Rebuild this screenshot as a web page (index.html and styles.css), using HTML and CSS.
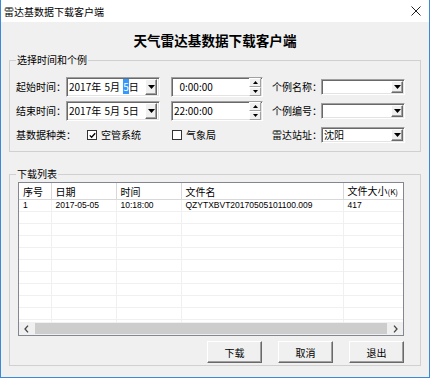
FILE: index.html
```html
<!DOCTYPE html>
<html lang="zh-CN">
<head>
    <meta charset="UTF-8">
    <meta name="viewport" content="width=device-width, initial-scale=1.0">
    <title>雷达基数据下载客户端</title>
    <link rel="stylesheet" href="styles.css">
</head>
<body>
    <div class="window">
        <div class="titlebar">
            <span>雷达基数据下载客户端</span>
            <svg class="close" width="10" height="10" viewBox="0 0 10 10"><path d="M0.5 0.5l9 9M9.5 0.5l-9 9" stroke="#222" stroke-width="1" fill="none"/></svg>
        </div>

        <div class="client">
            <h1>天气雷达基数据下载客户端</h1>

            <fieldset class="group group-query">
                <legend>选择时间和个例</legend>
                <div class="query-grid">
                    <label class="lbl">起始时间：</label>
                    <div class="datebox sunken">
                        <span class="date-text">2017年 5月 <span class="sel">5</span>日</span>
                        <span class="ddbtn"><svg width="7" height="4" viewBox="0 0 7 4"><path d="M0 0h7L3.5 4z"/></svg></span>
                    </div>
                    <div class="timebox sunken">
                        <span><span class="hh">0</span>:00:00</span>
                        <span class="spin">
                            <span class="spinbtn"><svg width="5" height="3" viewBox="0 0 5 3"><path d="M0 3h5L2.5 0z"/></svg></span>
                            <span class="spinbtn"><svg width="5" height="3" viewBox="0 0 5 3"><path d="M0 0h5L2.5 3z"/></svg></span>
                        </span>
                    </div>
                    <label class="lbl">个例名称：</label>
                    <div class="combo sunken">
                        <span></span>
                        <span class="ddbtn"><svg width="7" height="4" viewBox="0 0 7 4"><path d="M0 0h7L3.5 4z"/></svg></span>
                    </div>

                    <label class="lbl">结束时间：</label>
                    <div class="datebox sunken">
                        <span class="date-text">2017年 5月 5日</span>
                        <span class="ddbtn"><svg width="7" height="4" viewBox="0 0 7 4"><path d="M0 0h7L3.5 4z"/></svg></span>
                    </div>
                    <div class="timebox sunken">
                        <span><span class="hh">22</span>:00:00</span>
                        <span class="spin">
                            <span class="spinbtn"><svg width="5" height="3" viewBox="0 0 5 3"><path d="M0 3h5L2.5 0z"/></svg></span>
                            <span class="spinbtn"><svg width="5" height="3" viewBox="0 0 5 3"><path d="M0 0h5L2.5 3z"/></svg></span>
                        </span>
                    </div>
                    <label class="lbl">个例编号：</label>
                    <div class="combo sunken">
                        <span></span>
                        <span class="ddbtn"><svg width="7" height="4" viewBox="0 0 7 4"><path d="M0 0h7L3.5 4z"/></svg></span>
                    </div>

                    <div class="kind">
                        <label class="lbl kind-lbl">基数据种类：</label>
                        <span class="check-item">
                            <span class="check"><svg width="7" height="7" viewBox="0 0 7 7"><path d="M0.8 3.4l1.8 1.9L6.2 1.2" stroke="#000" stroke-width="1.3" fill="none"/></svg></span>
                            空管系统
                        </span>
                        <span class="check-item">
                            <span class="check"></span>
                            气象局
                        </span>
                    </div>
                    <label class="lbl">雷达站址：</label>
                    <div class="combo sunken">
                        <span>沈阳</span>
                        <span class="ddbtn"><svg width="7" height="4" viewBox="0 0 7 4"><path d="M0 0h7L3.5 4z"/></svg></span>
                    </div>
                </div>
            </fieldset>

            <fieldset class="group group-list">
                <legend>下载列表</legend>
                <div class="listview">
                    <div class="list-body">
                        <table class="grid">
                            <colgroup>
                                <col class="c-no">
                                <col class="c-date">
                                <col class="c-time">
                                <col class="c-file">
                                <col class="c-size">
                            </colgroup>
                            <thead>
                                <tr><th>序号</th><th>日期</th><th>时间</th><th>文件名</th><th>文件大小<small>(K)</small></th></tr>
                            </thead>
                            <tbody>
                                <tr><td>1</td><td>2017-05-05</td><td>10:18:00</td><td>QZYTXBVT20170505101100.009</td><td>417</td></tr>
                                <tr><td></td><td></td><td></td><td></td><td></td></tr>
                                <tr><td></td><td></td><td></td><td></td><td></td></tr>
                                <tr><td></td><td></td><td></td><td></td><td></td></tr>
                                <tr><td></td><td></td><td></td><td></td><td></td></tr>
                                <tr><td></td><td></td><td></td><td></td><td></td></tr>
                                <tr><td></td><td></td><td></td><td></td><td></td></tr>
                                <tr><td></td><td></td><td></td><td></td><td></td></tr>
                                <tr><td></td><td></td><td></td><td></td><td></td></tr>
                                <tr><td></td><td></td><td></td><td></td><td></td></tr>
                                <tr><td></td><td></td><td></td><td></td><td></td></tr>
                                <tr><td></td><td></td><td></td><td></td><td></td></tr>
                            </tbody>
                        </table>
                    </div>
                    <div class="hscroll">
                        <span class="arrow"><svg width="5" height="8" viewBox="0 0 5 8"><path d="M4 0.6L1 4l3 3.4" stroke="#444" stroke-width="1.3" fill="none"/></svg></span>
                        <span class="thumb"></span>
                        <span class="arrow"><svg width="5" height="8" viewBox="0 0 5 8"><path d="M1 0.6L4 4 1 7.4" stroke="#444" stroke-width="1.3" fill="none"/></svg></span>
                    </div>
                </div>

                <div class="buttons">
                    <button class="btn">下载</button>
                    <button class="btn">取消</button>
                    <button class="btn">退出</button>
                </div>
            </fieldset>
        </div>
    </div>
</body>
</html>
```

FILE: styles.css
```css
* {
    box-sizing: border-box;
}

body {
    margin: 0;
    font-family: "Noto Sans CJK SC", sans-serif;
    font-size: 10px;
    color: #000;
    background: #fff;
}

.window {
    width: 430px;
    height: 378px;
    border: 1px solid #3b8ad9;
    border-top: 0;
    background: #f0f0f0;
    overflow: hidden;
}

.titlebar {
    height: 22px;
    background: #fff;
    display: flex;
    align-items: center;
    justify-content: space-between;
    padding: 0 8px 0 3px;
}

.client {
    padding: 0 8px;
}

h1 {
    margin: 8px 0 4px;
    font-size: 13.6px;
    line-height: 20px;
    font-weight: bold;
    text-align: center;
}

.group {
    margin: 0;
    min-width: 0;
    border: 1px solid #d0d0d0;
}

.group legend {
    padding: 0 1px;
    line-height: 12px;
    font-size: 10px;
}

.group-query {
    padding: 11px 15px 6px 6px;
}

.group-list {
    margin-top: 16px;
    padding: 2px 16px 2px 8px;
}

.group-list legend {
    margin-left: -2px;
}

/* query form */
.query-grid {
    display: grid;
    grid-template-columns: 50px 105px 101px 49px 84px;
    grid-template-rows: 20px 20px 20px;
    row-gap: 4px;
    align-items: center;
}

.lbl {
    white-space: nowrap;
    line-height: 12px;
}

.sunken {
    background: #fff;
    border: 1px solid;
    border-color: #a0a0a0 #fff #fff #a0a0a0;
    box-shadow: inset 1px 1px #696969, inset -1px -1px #e3e3e3;
    display: flex;
    align-items: center;
    line-height: 12px;
}

.datebox {
    width: 94px;
    height: 20px;
    padding-left: 2px;
}

.date-text {
    white-space: pre;
    word-spacing: 1px;
}

.timebox {
    width: 92px;
    height: 20px;
    padding-left: 2px;
}

.hh {
    display: inline-block;
    width: 11px;
    text-align: right;
}

.sel {
    background: #3399ff;
    color: #fff;
}

.combo {
    width: 84px;
    height: 16px;
    padding-left: 2px;
}

.ddbtn {
    margin-left: auto;
    margin-right: 2px;
    width: 12px;
    height: 16px;
    background: #f0f0f0;
    border: 1px solid;
    border-color: #fff #696969 #696969 #fff;
    box-shadow: inset -1px -1px #a0a0a0;
    display: flex;
    align-items: center;
    justify-content: center;
}

.combo .ddbtn {
    height: 12px;
    margin-right: 1px;
}

.spin {
    margin-left: auto;
    margin-right: 1px;
    display: flex;
    flex-direction: column;
}

.spinbtn {
    width: 12px;
    height: 9px;
    background: #f0f0f0;
    border: 1px solid;
    border-color: #fff #a0a0a0 #a0a0a0 #fff;
    display: flex;
    align-items: center;
    justify-content: center;
}

.kind {
    grid-column: 1 / 4;
    display: flex;
    align-items: center;
}

.kind-lbl {
    width: 71px;
}

.check-item {
    width: 85px;
    display: flex;
    align-items: center;
    gap: 4px;
    line-height: 12px;
}

.check {
    width: 10px;
    height: 10px;
    background: #fff;
    border: 1px solid #333;
    display: flex;
    align-items: center;
    justify-content: center;
}

/* list view */
.listview {
    height: 154px;
    background: #fff;
    border: 1px solid #828790;
    display: flex;
    flex-direction: column;
}

.list-body {
    height: 139px;
    overflow: hidden;
}

.grid {
    width: 384px;
    table-layout: fixed;
    border-collapse: collapse;
}

.c-no { width: 32px; }
.c-date { width: 65px; }
.c-time { width: 65px; }
.c-file { width: 162px; }
.c-size { width: 60px; }

.grid th {
    height: 16px;
    padding: 0 0 0 4px;
    font-weight: normal;
    text-align: left;
    line-height: 15px;
    white-space: nowrap;
    overflow: hidden;
    border-right: 1px solid #d8d8d8;
    border-bottom: 1px solid #d8d8d8;
}

.grid th small {
    font-size: 8px;
}

.grid td {
    height: 12px;
    padding: 0 0 0 4px;
    font-family: "Liberation Sans", "Noto Sans CJK SC", sans-serif;
    font-size: 8.5px;
    line-height: 11px;
    white-space: nowrap;
    overflow: hidden;
    border-right: 1px solid #f0f0f0;
    border-bottom: 1px solid #f0f0f0;
}

.hscroll {
    height: 13px;
    margin-top: auto;
    background: #f0f0f0;
    display: flex;
    align-items: stretch;
}

.arrow {
    width: 15px;
    display: flex;
    align-items: center;
    justify-content: center;
}

.thumb {
    flex: 1;
    margin: 1px 1px;
    background: #cdcdcd;
}

/* buttons */
.buttons {
    margin-top: 5px;
    display: flex;
    justify-content: flex-end;
    gap: 16px;
}

.btn {
    width: 55px;
    height: 22px;
    padding: 0;
    font-family: inherit;
    font-size: 10px;
    color: #000;
    background: #f0f0f0;
    border: 1px solid;
    border-color: #fff #696969 #696969 #fff;
    box-shadow: inset -1px -1px #a0a0a0;
}
```
